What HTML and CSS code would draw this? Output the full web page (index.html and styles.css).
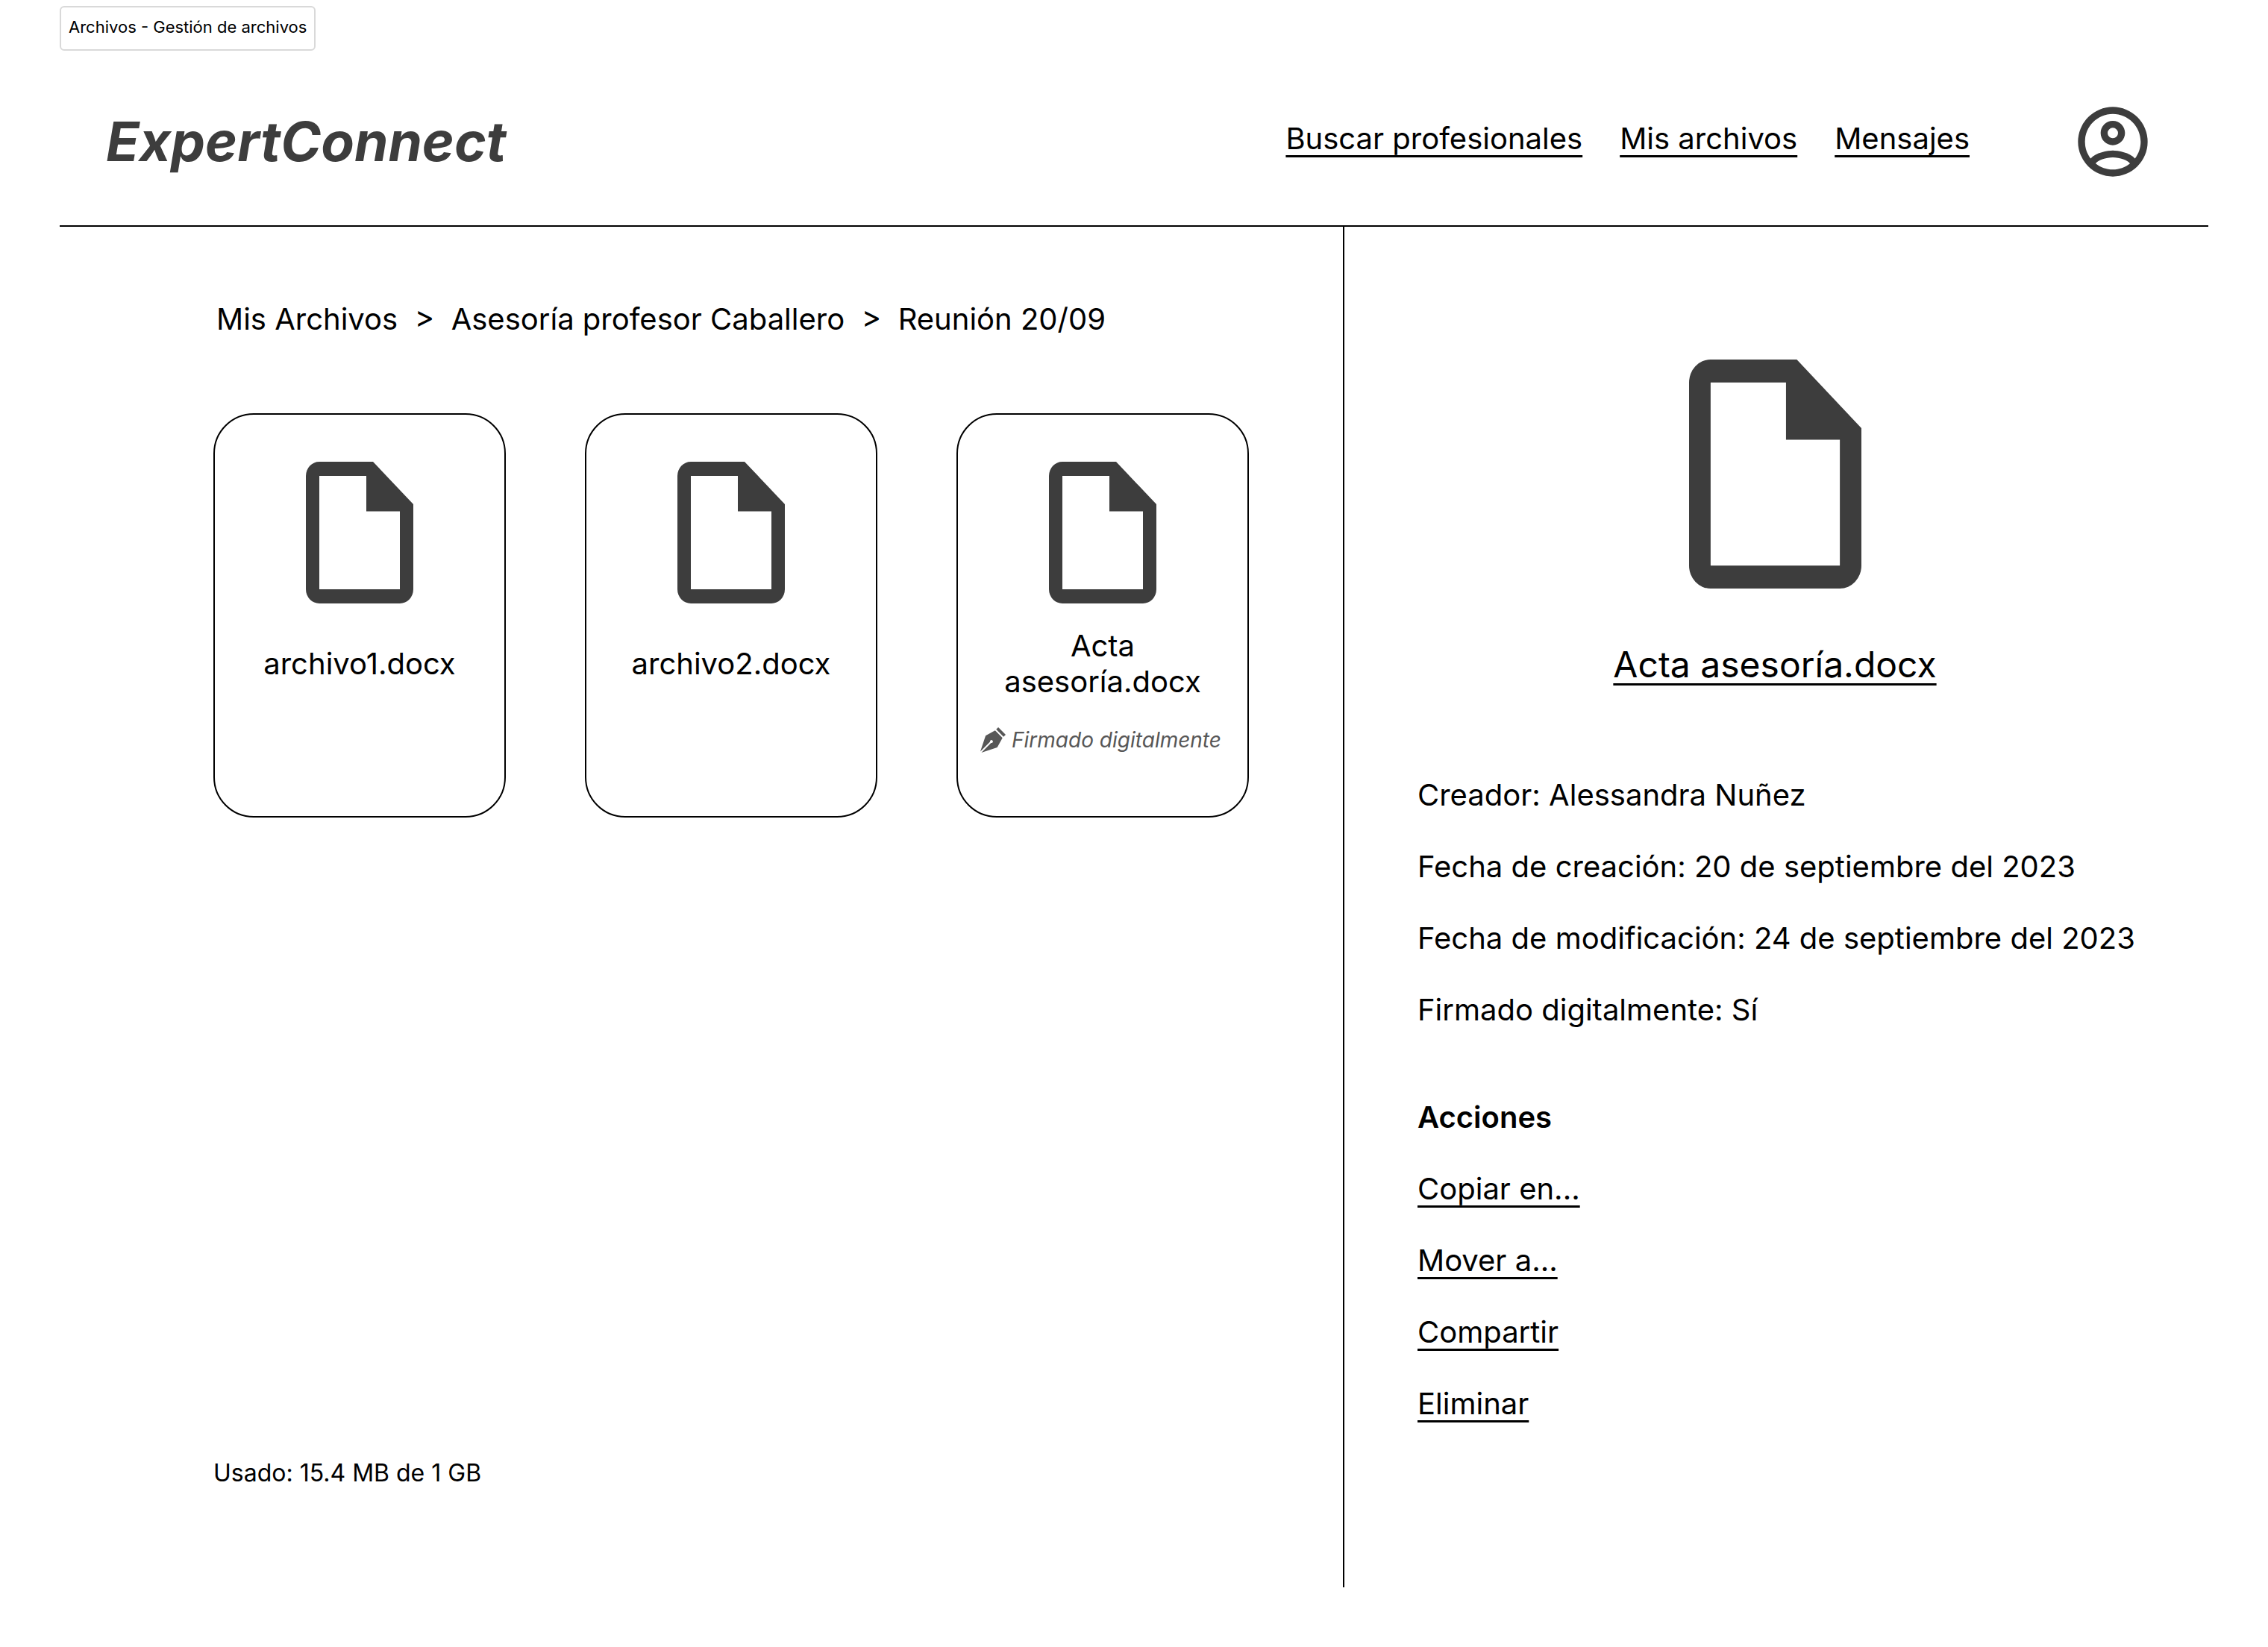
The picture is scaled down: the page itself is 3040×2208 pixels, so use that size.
FILE: index.html
```html
<!DOCTYPE html>
<html lang="es">
<head>
  <meta charset="utf-8">
  <meta name="viewport" content="width=device-width, initial-scale=1">
  <title>Archivos - Gestión de archivos</title>
  <link rel="stylesheet" href="styles.css">
</head>
<body>
  <svg class="sprite" aria-hidden="true">
    <symbol id="icon-file" viewBox="4 2 16 20" preserveAspectRatio="none">
      <path fill-rule="evenodd" d="M6 2h8l6 6v12a2 2 0 0 1-2 2H6a2 2 0 0 1-2-2V4a2 2 0 0 1 2-2zM6 4v16h12V9h-5V4z"/>
    </symbol>
    <symbol id="icon-pen" viewBox="3.5 3.5 17 17">
      <path d="M15.54,3.5L20.5,8.47L19.07,9.88L14.12,4.93L15.54,3.5M3.5,19.78L10,13.31C9.9,13 9.97,12.61 10.23,12.35C10.62,11.96 11.26,11.96 11.65,12.35C12.04,12.75 12.04,13.38 11.65,13.77C11.39,14.03 11,14.1 10.69,14L4.22,20.5L14.83,16.95L18.36,10.59L13.42,5.64L7.05,9.17L3.5,19.78Z"/>
    </symbol>
    <symbol id="icon-account" viewBox="0 0 24 24">
      <path d="M12,2A10,10 0 0,0 2,12A10,10 0 0,0 12,22A10,10 0 0,0 22,12A10,10 0 0,0 12,2M7.07,18.28C7.5,17.38 10.12,16.5 12,16.5C13.88,16.5 16.5,17.38 16.93,18.28C15.57,19.36 13.86,20 12,20C10.14,20 8.43,19.36 7.07,18.28M18.36,16.83C16.93,15.09 13.46,14.5 12,14.5C10.54,14.5 7.07,15.09 5.64,16.83C4.62,15.5 4,13.82 4,12C4,7.59 7.59,4 12,4C16.41,4 20,7.59 20,12C20,13.82 19.38,15.5 18.36,16.83M12,6C10.06,6 8.5,7.56 8.5,9.5C8.5,11.44 10.06,13 12,13C13.94,13 15.5,11.44 15.5,9.5C15.5,7.56 13.94,6 12,6M12,11A1.5,1.5 0 0,1 10.5,9.5A1.5,1.5 0 0,1 12,8A1.5,1.5 0 0,1 13.5,9.5A1.5,1.5 0 0,1 12,11Z"/>
    </symbol>
  </svg>

  <div class="page">
    <p class="tag">Archivos - Gestión de archivos</p>

    <header class="header">
      <h1 class="logo">ExpertConnect</h1>
      <nav class="nav" aria-label="Principal">
        <a class="link" href="#profesionales">Buscar profesionales</a>
        <a class="link" href="#archivos">Mis archivos</a>
        <a class="link" href="#mensajes">Mensajes</a>
      </nav>
      <a class="account" href="#perfil" aria-label="Perfil"><svg class="account-icon"><use href="#icon-account"/></svg></a>
    </header>

    <main class="main">
      <section class="browser">
        <p class="breadcrumb">Mis Archivos&nbsp; &gt;&nbsp; Asesoría profesor Caballero&nbsp; &gt;&nbsp; Reunión 20/09</p>
        <ul class="files">
          <li class="card">
            <svg class="file-icon" aria-hidden="true"><use href="#icon-file"/></svg>
            <p class="file-name">archivo1.docx</p>
          </li>
          <li class="card">
            <svg class="file-icon" aria-hidden="true"><use href="#icon-file"/></svg>
            <p class="file-name">archivo2.docx</p>
          </li>
          <li class="card">
            <svg class="file-icon" aria-hidden="true"><use href="#icon-file"/></svg>
            <p class="file-name">Acta asesoría.docx</p>
            <p class="signed"><svg class="pen-icon" aria-hidden="true"><use href="#icon-pen"/></svg>Firmado digitalmente</p>
          </li>
        </ul>
        <p class="usage">Usado: 15.4 MB de 1 GB</p>
      </section>

      <aside class="details">
        <div class="preview">
          <svg class="preview-icon" aria-hidden="true"><use href="#icon-file"/></svg>
          <a class="link preview-name" href="#acta">Acta asesoría.docx</a>
        </div>
        <div class="info">
          <p>Creador: Alessandra Nuñez</p>
          <p>Fecha de creación: 20 de septiembre del 2023</p>
          <p>Fecha de modificación: 24 de septiembre del 2023</p>
          <p>Firmado digitalmente: Sí</p>
        </div>
        <div class="actions">
          <h2 class="actions-title">Acciones</h2>
          <a class="link" href="#copiar">Copiar en...</a>
          <a class="link" href="#mover">Mover a...</a>
          <a class="link" href="#compartir">Compartir</a>
          <a class="link" href="#eliminar">Eliminar</a>
        </div>
      </aside>
    </main>
  </div>
</body>
</html>
```
FILE: styles.css
```css
* {
  box-sizing: border-box;
}

body,
h1,
h2,
p,
ul {
  margin: 0;
  padding: 0;
}

body {
  background: #fff;
  color: #000;
  font: 400 40px/48px Inter, "Liberation Sans", sans-serif;
}

svg {
  display: block;
  flex: none;
  fill: currentColor;
}

.sprite {
  position: absolute;
  width: 0;
  height: 0;
}

.page {
  display: flex;
  flex-direction: column;
  min-height: 100vh;
  padding: 8px 80px 80px;
}

.tag {
  align-self: flex-start;
  height: 60px;
  padding: 12px 10px;
  border: 2px solid #d9d9d9;
  border-radius: 6px;
  font-size: 22px;
  line-height: 28px;
}

.link {
  color: inherit;
  text-decoration: underline;
  text-decoration-skip-ink: none;
  text-decoration-thickness: 3px;
  text-underline-offset: 8px;
}

.header {
  display: flex;
  align-items: center;
  padding: 66px 72px 56px 62px;
  border-bottom: 2px solid #000;
}

.logo {
  color: #3d3d3d;
  font-size: 73px;
  font-style: italic;
  font-weight: 700;
  line-height: 88px;
}

.nav {
  display: flex;
  gap: 50px;
  margin-left: auto;
  padding-bottom: 8px;
}

.account {
  margin-left: 136px;
  color: #3d3d3d;
}

.account-icon {
  width: 112px;
  height: 112px;
}

.main {
  display: grid;
  flex: 1;
  grid-template-columns: 1720fr 1160fr;
}

.browser {
  display: flex;
  flex-direction: column;
  padding: 100px 126px 133px 206px;
}

.breadcrumb {
  padding-left: 4px;
}

.files {
  display: flex;
  gap: 106px;
  margin-top: 102px;
  list-style: none;
}

.card {
  display: flex;
  flex-direction: column;
  align-items: center;
  width: 392px;
  height: 542px;
  padding-top: 63px;
  border: 2px solid #000;
  border-radius: 54px;
}

.file-icon {
  width: 144px;
  height: 190px;
  color: #3d3d3d;
}

.file-name {
  display: flex;
  align-items: center;
  justify-content: center;
  width: 280px;
  height: 96px;
  margin-top: 33px;
  text-align: center;
}

.signed {
  display: flex;
  align-items: center;
  align-self: flex-start;
  gap: 8px;
  margin-top: 37px;
  padding-left: 30px;
  color: #575757;
  font-size: 28px;
  font-style: italic;
  line-height: 34px;
  white-space: nowrap;
}

.pen-icon {
  width: 34px;
  height: 34px;
}

.usage {
  margin-top: auto;
  font-size: 32px;
  line-height: 40px;
}

.details {
  padding: 178px 60px 80px 98px;
  border-left: 2px solid #000;
}

.preview {
  display: flex;
  flex-direction: column;
  align-items: center;
  gap: 72px;
  padding-right: 42px;
}

.preview-icon {
  width: 231px;
  height: 307px;
  color: #3d3d3d;
}

.preview-name {
  font-size: 48px;
  line-height: 60px;
}

.info,
.actions {
  display: flex;
  flex-direction: column;
  align-items: flex-start;
  gap: 48px;
}

.info {
  margin-top: 121px;
}

.actions {
  margin-top: 96px;
}

.actions-title {
  font-size: 40px;
  font-weight: 600;
}
```
